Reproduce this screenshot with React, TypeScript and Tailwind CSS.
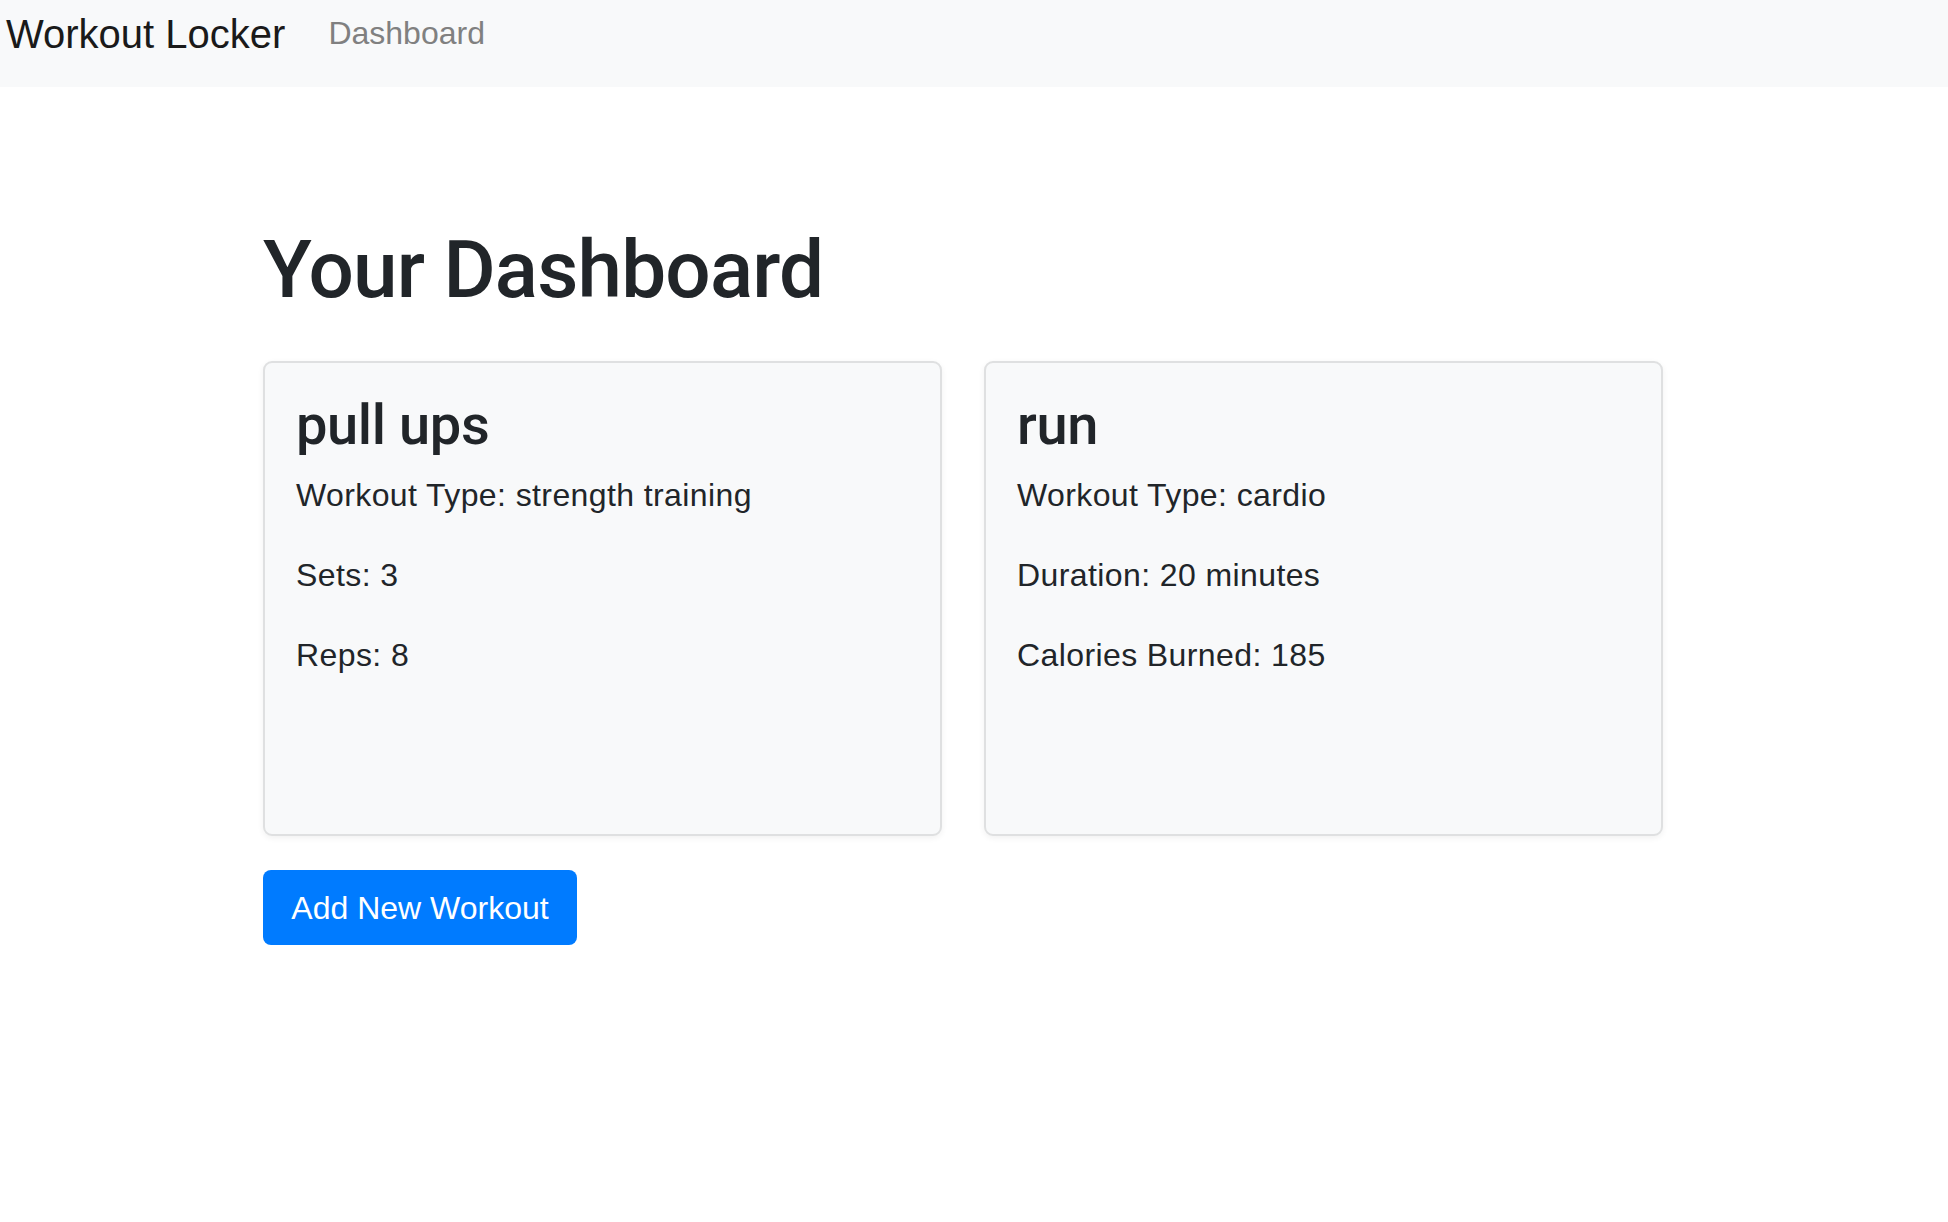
import React from "react";

const font = { fontFamily: '"Liberation Sans", Arial, sans-serif' };
const headFont = { fontFamily: 'Roboto, "Liberation Sans", Arial, sans-serif' };

function Card({ title, lines }: { title: string; lines: string[] }) {
  return (
    <div className="w-[679px] h-[475px] rounded-[9px] border-2 border-[#dfe0e1] bg-[#f8f9fa] shadow-[0_2px_6px_rgba(0,0,0,0.06)] pl-[31px] pr-[30px] pt-[29px]">
      <h3
        className="text-[56px] leading-[1.2] font-medium tracking-[-0.4px] text-[#212529] mb-[12px]"
        style={headFont}
      >
        {title}
      </h3>
      {lines.map((l) => (
        <p key={l} className="text-[32px] leading-[48px] tracking-[0.4px] text-[#212529] mb-[32px]">
          {l}
        </p>
      ))}
    </div>
  );
}

export default function App() {
  return (
    <div className="min-h-[1222px] bg-white" style={font}>
      <nav className="h-[87px] bg-[#f8f9fa] flex items-start pl-[6px]">
        <span className="mt-[4px] text-[40px] leading-[60px] text-[#1a1a1a]">Workout Locker</span>
        <a className="ml-[43px] mt-[9px] text-[32px] leading-[48px] text-[#808080]">Dashboard</a>
      </nav>
      <main className="pl-[263px] pt-[135px]">
        <h1
          className="text-[80px] leading-[96px] font-medium tracking-[-0.8px] text-[#212529] mb-[43px]"
          style={headFont}
        >
          Your Dashboard
        </h1>
        <div className="flex gap-[42px]">
          <Card title="pull ups" lines={["Workout Type: strength training", "Sets: 3", "Reps: 8"]} />
          <Card title="run" lines={["Workout Type: cardio", "Duration: 20 minutes", "Calories Burned: 185"]} />
        </div>
        <button className="mt-[34px] w-[314px] h-[75px] rounded-[8px] bg-[#007bff] text-white text-[32px] leading-[48px] flex items-center justify-center">
          Add New Workout
        </button>
      </main>
    </div>
  );
}
